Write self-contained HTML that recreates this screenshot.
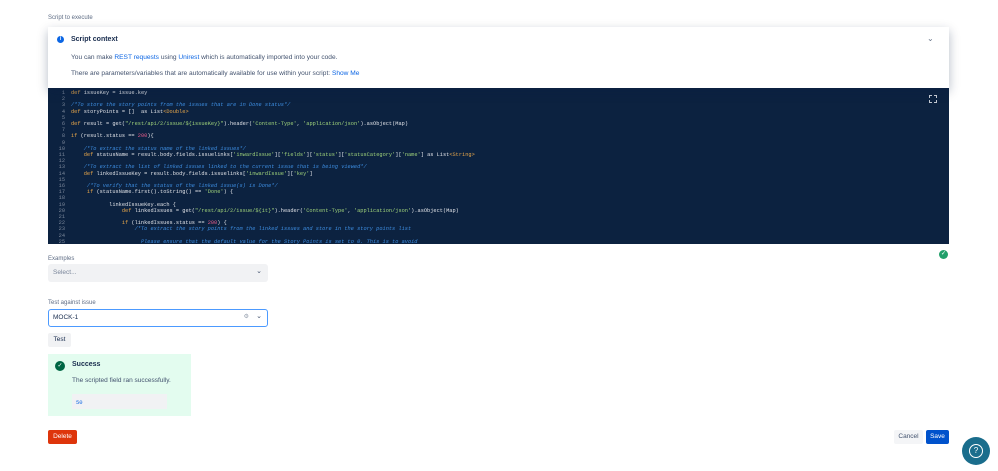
<!DOCTYPE html>
<html><head><style>
*{box-sizing:border-box;margin:0;padding:0}
body{width:998px;height:471px;background:#fff;font-family:"Liberation Sans",sans-serif;position:relative;overflow:hidden;color:#172b4d}
.abs{position:absolute}
.lbl{font-size:6px;color:#5e6c84}
.code{left:48px;top:88px;width:901px;height:156px;background:#0c2240;font-family:"Liberation Mono",monospace;font-size:5.3px;color:#dfe1e6;overflow:hidden}
.ln{position:absolute;left:0;width:17px;text-align:right;color:#7a8699}
.cl{position:absolute;left:23px;white-space:pre}
.k{color:#e5a54a}.c{color:#3d8de0;font-style:italic}.s{color:#9fd27a}.n{color:#e85c8a}
</style></head><body>
<div class="abs lbl" style="left:48px;top:15px">Script to execute</div>
<div class="abs code">
<div style="position:absolute;left:0;top:2px;width:100%">
</div>
</div>
<div class="abs" style="left:48px;top:27px;width:901px;height:61px;background:#fff;box-shadow:0 4px 10px rgba(9,30,66,.3);">
<div class="abs" style="left:9px;top:9px;width:7px;height:7px;border-radius:50%;background:#0c66e4;color:#fff;font-size:5px;text-align:center;line-height:7px;font-weight:bold">i</div>
<div class="abs" style="left:23px;top:9px;font-size:7px;font-weight:bold">Script context</div>
<div class="abs" style="left:879px;top:7px;font-size:8px;color:#6b778c">&#8964;</div>
<div class="abs" style="left:23px;top:27px;font-size:6.6px;color:#42526e">You can make <span style="color:#0c66e4">REST requests</span> using <span style="color:#0c66e4">Unirest</span> which is automatically imported into your code.</div>
<div class="abs" style="left:23px;top:43px;font-size:6.6px;color:#42526e">There are parameters/variables that are automatically available for use within your script: <span style="color:#0c66e4">Show Me</span></div>
</div>
<div class="abs" style="left:929px;top:95px;width:8px;height:8px;border:1.5px dashed #c1c7d0"></div>
<div class="abs" style="left:939px;top:250px;width:9px;height:9px;border-radius:50%;background:#22a06b;color:#fff;font-size:6px;text-align:center;line-height:9px">&#10003;</div>
<div class="abs lbl" style="left:48px;top:256px">Examples</div>
<div class="abs" style="left:48px;top:264px;width:220px;height:18px;background:#f1f2f4;border-radius:3px;font-size:6.5px;color:#7a869a;padding:5px 5px">Select...<span style="position:absolute;right:6px;top:3px;font-size:7px;color:#42526e">&#8964;</span></div>
<div class="abs lbl" style="left:48px;top:300px">Test against issue</div>
<div class="abs" style="left:48px;top:309px;width:220px;height:18px;border:1.5px solid #4c9aff;border-radius:3px;font-size:6.5px;padding:4px 4px">MOCK-1<span style="position:absolute;right:18px;top:3px;font-size:6px;color:#97a0af">&#9881;</span><span style="position:absolute;right:5px;top:2px;font-size:7px;color:#42526e">&#8964;</span></div>
<div class="abs" style="left:48px;top:333px;width:23px;height:14px;background:#f1f2f4;border-radius:2px;font-size:6.5px;text-align:center;line-height:14px">Test</div>
<div class="abs" style="left:48px;top:354px;width:143px;height:62px;background:#e3fcef">
<div class="abs" style="left:7px;top:7px;width:10px;height:10px;border-radius:50%;background:#006644;color:#fff;font-size:6px;text-align:center;line-height:10px">&#10003;</div>
<div class="abs" style="left:24px;top:7px;font-size:7px;font-weight:bold">Success</div>
<div class="abs" style="left:24px;top:23px;font-size:6.5px;color:#42526e">The scripted field ran successfully.</div>
<div class="abs" style="left:24px;top:40px;width:95px;height:15px;background:#f1f2f4;font-family:'Liberation Mono',monospace;font-size:5.5px;color:#0c66e4;padding:5px 4px">50</div>
</div>
<div class="abs" style="left:48px;top:430px;width:29px;height:14px;background:#de350b;border-radius:2px;color:#fff;font-size:6.5px;text-align:center;line-height:14px">Delete</div>
<div class="abs" style="left:894px;top:430px;width:29px;height:14px;background:#f4f5f7;border-radius:2px;color:#42526e;font-size:6.5px;text-align:center;line-height:14px">Cancel</div>
<div class="abs" style="left:926px;top:430px;width:23px;height:14px;background:#0052cc;border-radius:2px;color:#fff;font-size:6.5px;text-align:center;line-height:14px">Save</div>
<div class="abs" style="left:962px;top:437px;width:28px;height:28px;border-radius:50%;background:#1a6d8c"><div style="position:absolute;left:7px;top:7px;width:14px;height:14px;border:1.2px solid #fff;border-radius:50%;color:#fff;font-size:8px;text-align:center;line-height:12px">?</div></div>
<script>
var L=[
'<span class="k">def</span> issueKey = issue.key','',
'<span class="c">/*To store the story points from the issues that are in Done status*/</span>',
'<span class="k">def</span> storyPoints = []  as List<span class="k">&lt;Double&gt;</span>','',
'<span class="k">def</span> result = get(<span class="s">"/rest/api/2/issue/${issueKey}"</span>).header(<span class="s">\'Content-Type\'</span>, <span class="s">\'application/json\'</span>).asObject(Map)','',
'<span class="k">if</span> (result.status == <span class="n">200</span>){','',
'    <span class="c">/*To extract the status name of the linked issues*/</span>',
'    <span class="k">def</span> statusName = result.body.fields.issuelinks[<span class="s">\'inwardIssue\'</span>][<span class="s">\'fields\'</span>][<span class="s">\'status\'</span>][<span class="s">\'statusCategory\'</span>][<span class="s">\'name\'</span>] as List<span class="k">&lt;String&gt;</span>','',
'    <span class="c">/*To extract the list of linked issues linked to the current issue that is being viewed*/</span>',
'    <span class="k">def</span> linkedIssueKey = result.body.fields.issuelinks[<span class="s">\'inwardIssue\'</span>][<span class="s">\'key\'</span>]','',
'     <span class="c">/*To verify that the status of the linked issue(s) is Done*/</span>',
'     <span class="k">if</span> (statusName.first().toString() == <span class="s">\'Done\'</span>) {','',
'            linkedIssueKey.each {',
'                <span class="k">def</span> linkedIssues = get(<span class="s">"/rest/api/2/issue/${it}"</span>).header(<span class="s">\'Content-Type\'</span>, <span class="s">\'application/json\'</span>).asObject(Map)','',
'                <span class="k">if</span> (linkedIssues.status == <span class="n">200</span>) {',
'                    <span class="c">/*To extract the story points from the linked issues and store in the story points list</span>','',
'                      <span class="c">Please ensure that the default value for the Story Points is set to 0. This is to avoid</span>'];
var h='';for(var i=0;i<L.length;i++){h+='<div class="ln" style="top:'+(i*6.2)+'px">'+(i+1)+'</div><div class="cl" style="top:'+(i*6.2)+'px">'+L[i]+'</div>';}
document.querySelector('.code>div').innerHTML=h;
</script>
</body></html>
